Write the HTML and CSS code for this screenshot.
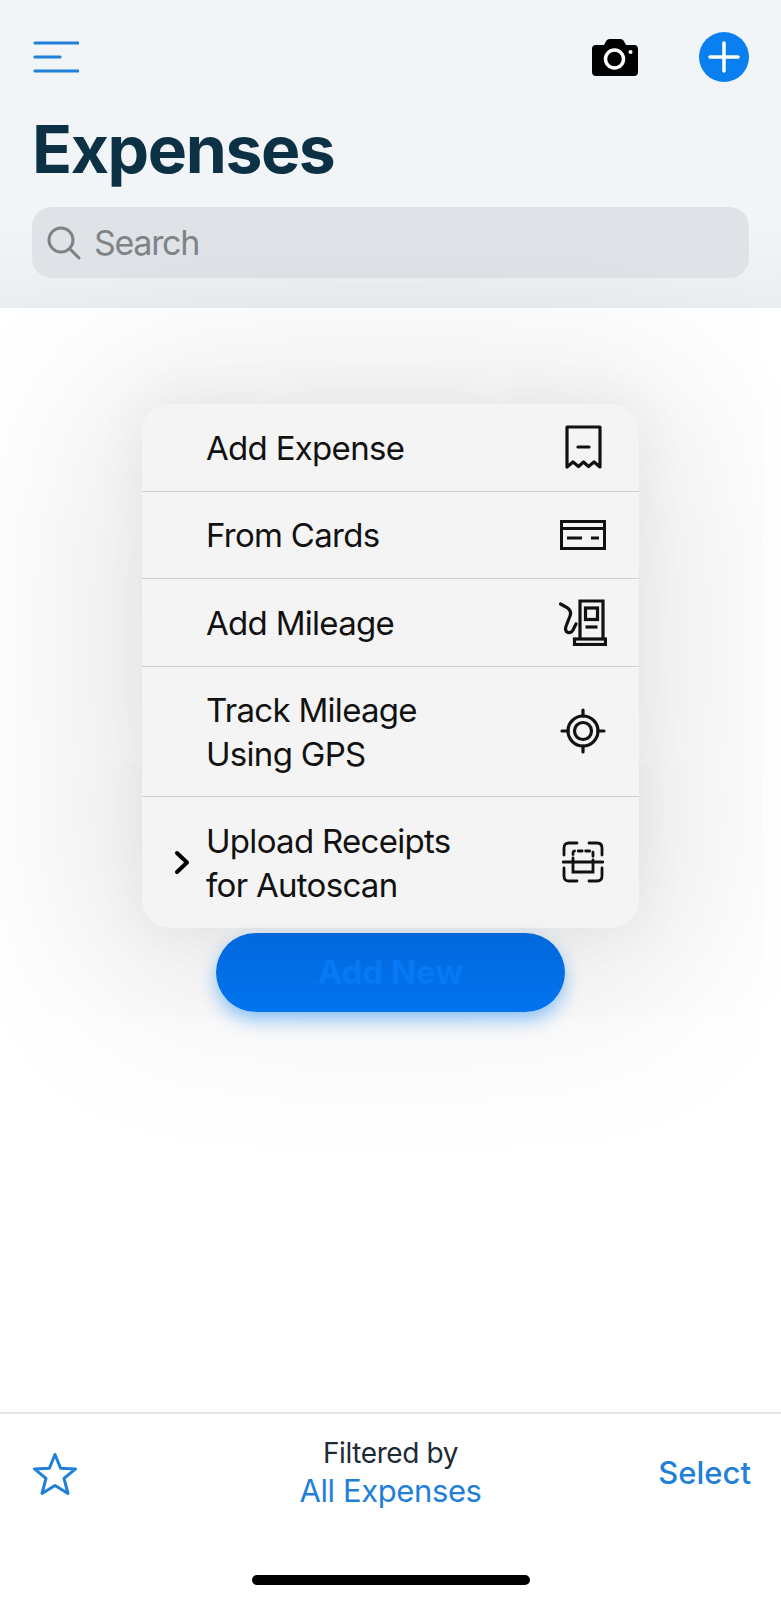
FILE: index.html
```html
<!DOCTYPE html>
<html lang="en">
<head>
<meta charset="utf-8">
<title>Expenses</title>
<link rel="stylesheet" href="styles.css">
</head>
<body>
<div class="page">
  <header class="header">
    <div class="toolbar">
      <svg class="icon-menu" width="46" height="32" viewBox="0 0 46 32" fill="none" stroke="#1f80d9" stroke-width="3.200" stroke-linecap="round"><path d="M2 2H45M2 16H27M2 30H45"/></svg>
      <div class="toolbar-actions">
        <svg width="46" height="37" viewBox="0 0 46 37"><path d="M4 6h8l2.500-4.500q1-1.500 3-1.500h11q2 0 3 1.500L34 6h8q4 0 4 4v23q0 4-4 4H4q-4 0-4-4V10q0-4 4-4z" fill="#000"/><circle cx="22.500" cy="20" r="9" fill="none" stroke="#fff" stroke-width="3.500"/><circle cx="38.500" cy="13" r="2" fill="#fff"/></svg>
        <svg width="50" height="50" viewBox="0 0 50 50"><circle cx="25" cy="25" r="25" fill="#0a7ff0"/><path d="M25 11V39M11 25H39" stroke="#fff" stroke-width="3.500" stroke-linecap="round"/></svg>
      </div>
    </div>
    <h1 class="title">Expenses</h1>
    <div class="search">
      <svg width="34" height="34" viewBox="0 0 34 34" fill="none" stroke="#7f8387" stroke-width="3" stroke-linecap="round"><circle cx="14" cy="14" r="12"/><path d="M23 23L32 32"/></svg>
      <span class="search-text">Search</span>
    </div>
  </header>

  <main class="main">
    <ul class="menu">
      <li class="menu-row">
        <span class="menu-label">Add Expense</span>
        <span class="menu-icon"><svg width="37" height="44" viewBox="0 0 37 44" fill="none" stroke="#111" stroke-width="3.200" stroke-linejoin="round" stroke-linecap="round"><path d="M2 2H35V42L29 37L23.500 41.500L18.500 37L13.500 41.500L8 37L2 42Z"/><path d="M13 22H24"/></svg></span>
      </li>
      <li class="menu-row">
        <span class="menu-label">From Cards</span>
        <span class="menu-icon"><svg width="46" height="30" viewBox="0 0 46 30" fill="none" stroke="#111" stroke-width="3"><rect x="1.500" y="1.500" width="43" height="27"/><path d="M1.500 8.500H44.500M7 18H22M31 18H39"/></svg></span>
      </li>
      <li class="menu-row">
        <span class="menu-label">Add Mileage</span>
        <span class="menu-icon"><svg width="48" height="47" viewBox="0 0 48 47" fill="none" stroke="#111" stroke-width="3.200"><path d="M21 41V2H44V41"/><rect x="15.500" y="40" width="31" height="5.500"/><rect x="26.500" y="9" width="12" height="11.500"/><path d="M26.500 28H38.500"/><path d="M1.500 5L8 8.500Q13 12 11 17L7.500 26Q5 32 9 33.500Q13 34.500 15 29L17 25" stroke-linecap="round"/></svg></span>
      </li>
      <li class="menu-row menu-row-tall">
        <span class="menu-label">Track Mileage<br>Using GPS</span>
        <span class="menu-icon"><svg width="46" height="46" viewBox="0 0 46 46" fill="none" stroke="#111" stroke-width="3.200" stroke-linecap="round"><circle cx="23" cy="23" r="15"/><circle cx="23" cy="23" r="8.500"/><path d="M23 2V8M23 38V44M2 23H8M38 23H44"/></svg></span>
      </li>
      <li class="menu-row menu-row-tall">
        <svg class="chevron" width="16" height="25" viewBox="0 0 16 25" fill="none" stroke="#000" stroke-width="4" stroke-linecap="round" stroke-linejoin="round"><path d="M3 3L13 12.500L3 22"/></svg>
        <span class="menu-label">Upload Receipts<br>for Autoscan</span>
        <span class="menu-icon"><svg width="42" height="42" viewBox="0 0 42 42" fill="none" stroke="#111" stroke-width="2.800" stroke-linecap="round"><path d="M15 2H7Q2 2 2 7V14M27 2H35Q40 2 40 7V14M15 40H7Q2 40 2 35V27M27 40H35Q40 40 40 35V27"/><path d="M1 21H41"/><path d="M11 21V12Q11 10 13 10H29Q31 10 31 12V21" stroke-dasharray="4 3.500"/><path d="M11 21V31H31V21"/></svg></span>
      </li>
    </ul>
    <button class="add-button" type="button">Add New</button>
  </main>

  <footer class="footer">
    <div class="footer-bar">
      <svg class="star" width="46" height="44" viewBox="0 0 46 44" fill="none" stroke="#1f80d9" stroke-width="3" stroke-linejoin="round"><path d="M23 2.500L28.600 16.200L43.600 16.900L32 26.400L36 41.500L23 33.400L10 41.500L14 26.400L2.400 16.900L17.400 16.200Z"/></svg>
      <div class="filter">
        <div class="filter-top">Filtered by</div>
        <div class="filter-value">All Expenses</div>
      </div>
      <span class="select">Select</span>
    </div>
    <div class="home-indicator"></div>
  </footer>
</div>
</body>
</html>
```

FILE: styles.css
```css
* { box-sizing: border-box; }
html, body { margin: 0; padding: 0; background: #fff; }
body { font-family: Inter, "Liberation Sans", sans-serif; }

.page {
  width: 781px;
  height: 1600px;
  display: flex;
  flex-direction: column;
  overflow: hidden;
}

.header {
  height: 308px;
  background: linear-gradient(#f1f5f8 0%, #f1f5f8 72%, #eaeef1 100%);
  padding: 32px 32px 0 32px;
  flex: none;
}
.toolbar {
  display: flex;
  justify-content: space-between;
  align-items: flex-start;
  height: 50px;
}
.icon-menu { margin: 9px 0 0 1px; }
.toolbar-actions { display: flex; align-items: center; gap: 61px; }
.title {
  margin: 27px 0 0 0;
  font-size: 66px;
  line-height: 80px;
  font-weight: 700;
  letter-spacing: -1.400px;
  color: #0c3044;
}
.search {
  margin-top: 18px;
  height: 71px;
  border-radius: 20px;
  background: #dfe2e6;
  display: flex;
  align-items: center;
  gap: 13px;
  padding: 0 0 0 15px;
}
.search-text { font-size: 34px; color: #7f8387; letter-spacing: -1.300px; }

.main {
  flex: 1;
  display: flex;
  flex-direction: column;
  align-items: center;
  padding-top: 96px;
}
.menu {
  list-style: none;
  margin: 0;
  padding: 0;
  width: 497px;
  background: #f4f4f4;
  border-radius: 28px;
  box-shadow: 0 20px 190px 40px rgba(0, 0, 0, .11), 0 0 50px 6px rgba(0, 0, 0, .045);
  position: relative;
  z-index: 1;
}
.menu-row {
  position: relative;
  height: 87.500px;
  padding: 0 0 0 64px;
  display: flex;
  align-items: center;
  border-bottom: 1px solid #cfcfd0;
}
.menu-row:last-child { border-bottom: 0; }
.menu-row-tall { height: 130.500px; }
.menu-label {
  flex: 1;
  padding-top: 1px;
  font-size: 33px;
  line-height: 44px;
  color: #111;
  letter-spacing: -0.7px;
}
.menu-icon {
  width: 48px;
  margin-right: 32px;
  display: flex;
  justify-content: center;
}
.chevron { position: absolute; left: 32px; top: 53px; }

.add-button {
  position: relative;
  z-index: 2;
  margin-top: 5px;
  width: 349px;
  height: 79px;
  border: 0;
  border-radius: 40px;
  background: linear-gradient(#0268dc, #0274f0);
  box-shadow: 0 8px 18px rgba(10, 130, 245, .45);
  color: #0779f4;
  font-family: inherit;
  font-size: 33px;
  font-weight: 700;
}

.footer {
  flex: none;
  height: 188px;
  background: #fff;
  border-top: 2px solid #e6e6e6;
  display: flex;
  flex-direction: column;
}
.footer-bar {
  height: 161px;
  padding: 37px 30px 0 30px;
  display: grid;
  grid-template-columns: 1fr auto 1fr;
  align-items: start;
}
.star { margin: 1px 0 0 2px; }
.filter {
  text-align: center;
  margin-top: -16px;
}
.filter-top { font-size: 28px; line-height: 37px; color: #1c2b36; letter-spacing: -0.4px; }
.filter-value { font-size: 31px; line-height: 37px; color: #1f80d9; letter-spacing: -0.4px; }
.select { justify-self: end; margin-top: 2px; font-size: 31px; line-height: 40px; font-weight: 500; color: #1f80d9; }
.home-indicator {
  width: 278px;
  height: 10px;
  border-radius: 5px;
  background: #000;
  align-self: center;
}
```
